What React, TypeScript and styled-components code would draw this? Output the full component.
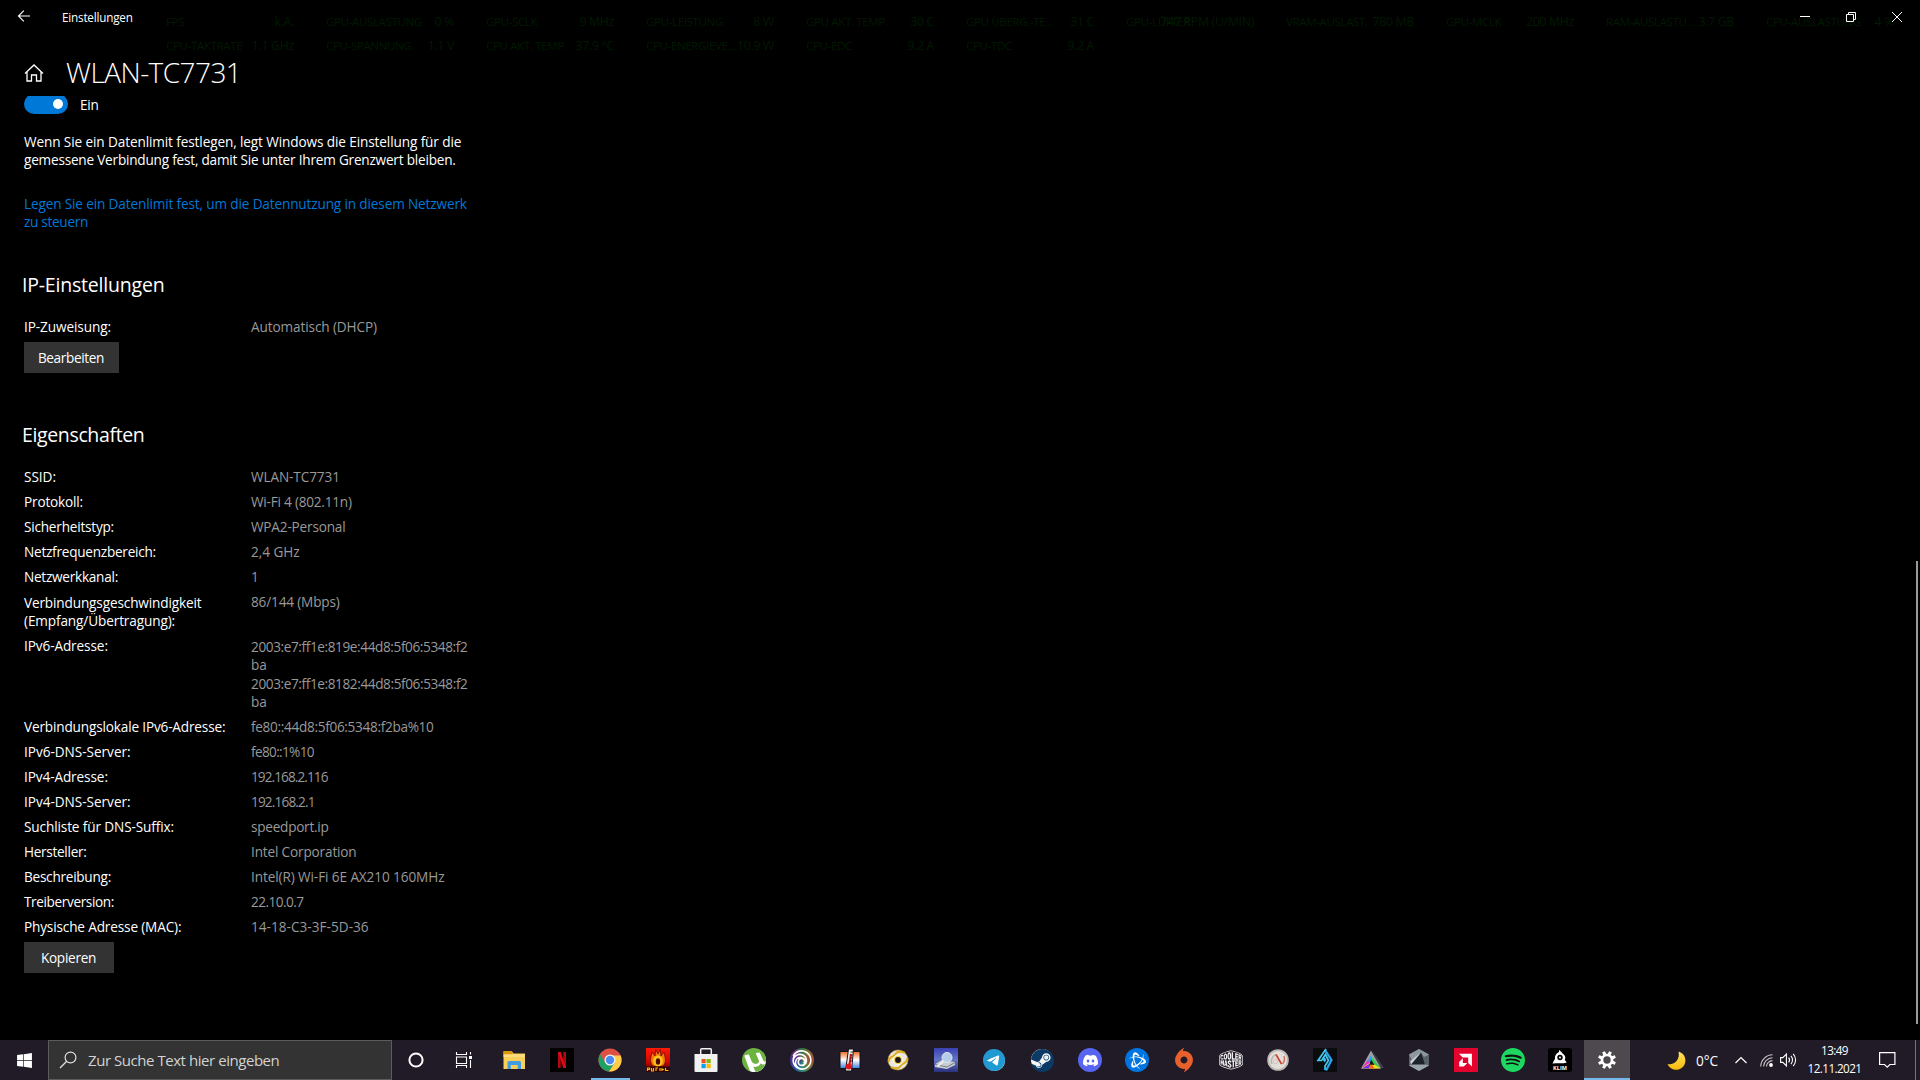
import React from "react";
import styled, { createGlobalStyle } from "styled-components";
import { SiBattledotnet, SiOrigin, SiUbisoft, SiUtorrent, SiCoolermaster, SiTelegram, SiSteam, SiDiscord, SiSpotify } from "react-icons/si";
import { FaWindows } from "react-icons/fa";

const Global = createGlobalStyle`
  html, body { margin: 0; background: #000; }
  body { font-family: "Open Sans", "Noto Sans", sans-serif; color: #fff; overflow: hidden; }
  * { box-sizing: border-box; }
  svg { display: block; overflow: visible; }
`;

const Screen = styled.div`
  position: relative;
  width: 1920px;
  height: 1080px;
  display: flex;
  flex-direction: column;
  overflow: hidden;
  background: #000;
`;

/* ---------- hardware monitor overlay ---------- */
const Overlay = styled.div`
  position: absolute;
  left: 166px;
  top: 10px;
  display: grid;
  grid-template-columns: repeat(11, 160px);
  grid-auto-rows: 24px;
  color: #001a00;
  line-height: 24px;
  white-space: nowrap;
`;
const Metric = styled.div`
  display: grid;
  width: 128px;
`;
const MetricName = styled.span`
  grid-area: 1 / 1;
  font-size: 11.5px;
  letter-spacing: -0.34px;
`;
const MetricValue = styled.span`
  grid-area: 1 / 1;
  justify-self: end;
  font-size: 12.3px;
  letter-spacing: -0.3px;
`;

/* ---------- title bar ---------- */
const TitleBar = styled.header`
  position: relative;
  display: flex;
  align-items: center;
  height: 34px;
  padding-left: 17px;
`;
const BackButton = styled.span`
  width: 45px;
  margin-top: -3px;
`;
const AppName = styled.span`
  flex: 1;
  margin-top: -1px;
  font-size: 11.7px;
  line-height: 18px;
  letter-spacing: -0.2px;
`;
const CaptionButton = styled.span`
  width: 46px;
  display: flex;
  justify-content: center;
`;

/* ---------- page ---------- */
const Body = styled.div`
  position: relative;
  display: flex;
  justify-content: space-between;
  height: 1006px;
`;
const Page = styled.main`
  width: 480px;
  padding: 20px 0 0 24px;
`;
const Heading = styled.h1`
  display: flex;
  align-items: center;
  height: 36px;
  margin: 0;
  font-weight: 300;
  font-size: 28px;
  line-height: 36px;
  letter-spacing: -0.55px;
`;
const HomeIcon = styled.span`
  width: 42px;
  padding-top: 1px;
`;
const ToggleRow = styled.div`
  display: flex;
  align-items: flex-start;
  gap: 12px;
  height: 18px;
  margin-top: 6px;
  overflow: hidden;
`;
const Toggle = styled.span`
  display: flex;
  align-items: center;
  justify-content: flex-end;
  width: 44px;
  height: 20px;
  margin-top: -2px;
  padding-right: 5px;
  border-radius: 10px;
  background: #0078d7;
`;
const Knob = styled.span`
  width: 10px;
  height: 10px;
  border-radius: 50%;
  background: #fff;
`;
const Line = styled.span<{ $ls?: number }>`
  display: block;
  font-size: 13.6px;
  line-height: 18px;
  letter-spacing: ${(p) => p.$ls ?? 0}px;
  white-space: nowrap;
`;
const Paragraph = styled.p`
  margin: 19px 0 0;
`;
const LimitLink = styled.a`
  display: block;
  margin-top: 26px;
  color: #0078d7;
`;
const SectionTitle = styled.h2<{ $ls: number; $gap: number }>`
  margin: ${(p) => p.$gap}px 0 16px -2px;
  font-weight: 400;
  font-size: 19.5px;
  line-height: 26px;
  letter-spacing: ${(p) => p.$ls}px;
`;
const Property = styled.div`
  display: grid;
  grid-template-columns: 227px 1fr;
  padding: 4px 0 3px;
`;
const PropertyLabel = styled.div<{ $multi?: boolean }>`
  padding-top: ${(p) => (p.$multi ? 1 : 0)}px;
`;
const PropertyValue = styled.div`
  color: #999;
`;
const Address = styled.div`
  padding-top: 1px;
`;
const PushButton = styled.button<{ $w: number }>`
  display: flex;
  align-items: center;
  justify-content: center;
  width: ${(p) => p.$w}px;
  height: 31px;
  margin-top: 3px;
  padding: 1px 1px 0 0;
  border: 0;
  background: #333;
  color: #fff;
  font-family: inherit;
`;
const ScrollThumb = styled.div`
  width: 2px;
  height: 463px;
  margin: 527px 2px 0 0;
  background: #9a9a9a;
`;

/* ---------- taskbar ---------- */
const Taskbar = styled.footer`
  display: flex;
  height: 40px;
  background: #211b27;
`;
const TaskItem = styled.div<{ $w?: number; $state?: "running" | "active"; $before?: number }>`
  display: flex;
  align-items: center;
  justify-content: center;
  width: ${(p) => p.$w ?? 48}px;
  margin-left: ${(p) => p.$before ?? 0}px;
  background: ${(p) => (p.$state === "active" ? "#4d494f" : "transparent")};
  position: relative;
  &::after {
    content: "";
    display: ${(p) => (p.$state ? "block" : "none")};
    position: absolute;
    bottom: 0;
    left: ${(p) => (p.$state === "active" ? 0 : 5)}px;
    right: ${(p) => (p.$state === "active" ? 0 : 4)}px;
    height: 2px;
    background: #76b9ed;
  }
`;
const LateGroup = styled.div`
  display: flex;
  gap: 1px;
`;
const SearchBox = styled.div`
  display: flex;
  align-items: center;
  width: 344px;
  padding-left: 10px;
  border: 1px solid #5c5b5e;
  background: #333;
  color: #d2d2d2;
`;
const SearchText = styled.span`
  margin-left: 11px;
  font-size: 15px;
  line-height: 22px;
  letter-spacing: -0.45px;
`;
const Disc = styled.span<{ $size: number; $bg: string; $icon: number; $fg: string }>`
  display: flex;
  align-items: center;
  justify-content: center;
  width: ${(p) => p.$size}px;
  height: ${(p) => p.$size}px;
  border-radius: 50%;
  background: ${(p) => p.$bg};
  color: ${(p) => p.$fg};
  svg { width: ${(p) => p.$icon}px; height: ${(p) => p.$icon}px; flex: none; }
`;
const Tray = styled.div`
  display: grid;
  grid-template-columns: 29px 39px 25px 20px 27px 72px 36px 5px;
  align-items: center;
  margin-left: auto;
`;
const Temperature = styled.span`
  font-size: 13.6px;
  line-height: 20px;
  letter-spacing: -0.1px;
  padding-top: 1px;
`;
const Clock = styled.div`
  width: 55px;
  margin-top: -2px;
  text-align: center;
  font-size: 11.7px;
  line-height: 18px;
  letter-spacing: -0.57px;
`;
const ShowDesktop = styled.div`
  height: 40px;
  border-left: 1px solid #77737b;
`;

const Svg = ({ s = 24, h, children }: { s?: number; h?: number; children: React.ReactNode }) => (
  <svg width={s} height={h ?? s} viewBox={`0 0 ${s} ${h ?? s}`} fill="none">{children}</svg>
);

const metrics: [string, string][] = [
  ["FPS", "k.A."], ["GPU-AUSLASTUNG", "0 %"], ["GPU-SCLK", "9 MHz"], ["GPU-LEISTUNG", "8 W"],
  ["GPU AKT. TEMP.", "30 C"], ["GPU ÜBERG.-TE...", "31 C"], ["GPU-LÜFTER", "747 RPM (U/MIN)"],
  ["VRAM-AUSLAST.", "780 MB"], ["GPU-MCLK", "200 MHz"], ["RAM-AUSLASTU...", "3.7 GB"], ["CPU-AUSLASTUNG", "4 %"],
  ["CPU-TAKTRATE", "1.1 GHz"], ["CPU-SPANNUNG", "1.1 V"], ["CPU AKT. TEMP.", "37.9 °C"],
  ["CPU-ENERGIEVE...", "10.9 W"], ["CPU-EDC", "9.2 A"], ["CPU-TDC", "9.2 A"],
];

type Txt = [string, number];
const before: [Txt, Txt][] = [
  [["SSID:", -0.03], ["WLAN-TC7731", -0.1]],
  [["Protokoll:", -0.17], ["Wi-Fi 4 (802.11n)", -0.22]],
  [["Sicherheitstyp:", -0.215], ["WPA2-Personal", -0.18]],
  [["Netzfrequenzbereich:", -0.245], ["2,4 GHz", -0.05]],
  [["Netzwerkkanal:", -0.255], ["1", 0]],
];
const after: [Txt, Txt][] = [
  [["Verbindungslokale IPv6-Adresse:", -0.16], ["fe80::44d8:5f06:5348:f2ba%10", -0.31]],
  [["IPv6-DNS-Server:", -0.03], ["fe80::1%10", -0.65]],
  [["IPv4-Adresse:", -0.1], ["192.168.2.116", -0.92]],
  [["IPv4-DNS-Server:", -0.03], ["192.168.2.1", -0.84]],
  [["Suchliste für DNS-Suffix:", -0.12], ["speedport.ip", -0.25]],
  [["Hersteller:", -0.3], ["Intel Corporation", -0.16]],
  [["Beschreibung:", -0.257], ["Intel(R) Wi-Fi 6E AX210 160MHz", -0.1]],
  [["Treiberversion:", -0.375], ["22.10.0.7", -0.54]],
  [["Physische Adresse (MAC):", -0.15], ["14-18-C3-3F-5D-36", 0.02]],
];

const Row = ({ item: [l, v] }: { item: [Txt, Txt] }) => (
  <Property>
    <PropertyLabel><Line $ls={l[1]}>{l[0]}</Line></PropertyLabel>
    <PropertyValue><Line $ls={v[1]}>{v[0]}</Line></PropertyValue>
  </Property>
);

const Explorer = () => (
  <Svg>
    <path d="M1.5 3.5h8.5l1.5 2H23v15.5H1.5z" fill="#f9cf5b" />
    <path d="M1.5 3h8l1.5 2.5-1.5 1H1.5z" fill="#d9980f" />
    <path d="M1.5 6.5H23V9H1.5z" fill="#fddc7c" />
    <path d="M5.5 21v-6.5a1.500 1.500 0 0 1 1.500-1.500h10.500a1.500 1.500 0 0 1 1.500 1.500V21h-3.300v-4H8.800v4z" fill="#3f9de0" />
  </Svg>
);
const Netflix = () => (
  <Svg>
    <path d="M0 0h24v24H0z" fill="#000" />
    <path d="M8 4h2.700v15.800L8 20zM13.300 4H16v16l-2.700-.2z" fill="#b20710" />
    <path d="M8 4h2.700L16 20l-2.700-.2z" fill="#e50914" />
  </Svg>
);
const Chrome = () => (
  <Svg>
    <circle cx="12" cy="12" r="11.500" fill="#dd5144" />
    <path d="M2 6.250A11.500 11.500 0 0 0 11 23.450L16.800 14.600 12 12 7.200 14.700z" fill="#1da261" />
    <path d="M22.700 7.500H12l4.800 7.200L11 23.450A11.500 11.500 0 0 0 22.700 7.500z" fill="#ffcd46" />
    <circle cx="12" cy="12" r="5.500" fill="#f4f4f4" />
    <circle cx="12" cy="12" r="4.200" fill="#4a8af4" />
  </Svg>
);
const Burn = () => (
  <Svg>
    <defs><linearGradient id="burn" x2="0" y2="1"><stop stopColor="#ff1a08" /><stop offset=".55" stopColor="#d50700" /><stop offset="1" stopColor="#3c0000" /></linearGradient></defs>
    <path d="M0 0h24v24H0z" fill="url(#burn)" />
    <path d="M7 18C2.500 13 5.500 9 6 4l3 4 .8-6.500L12 6l2.300-4.500L15 8l3-4c.5 5 3.500 9-1 14z" fill="#f97a0c" stroke="#5d0500" strokeWidth=".7" />
    <ellipse cx="12" cy="13" rx="4.800" ry="5.500" fill="#ffc31e" />
    <ellipse cx="12" cy="13.500" rx="2.200" ry="3.300" fill="#4a0a00" />
    <path d="M0 18.500h24V24H0z" fill="#310000" />
    <path d="M1.500 23v-3h2v1.500h-2M5.500 20v3h2v-3M10 23v-3h2M14 20v3M16 23v-3M16 21.500h2M19.500 20v3M19.500 22.500h3" stroke="#f5b514" strokeWidth="1.200" />
  </Svg>
);
const Store = () => (
  <Svg>
    <path d="M6.700 7V1.800a1 1 0 0 1 1-1h8.600a1 1 0 0 1 1 1V7" stroke="#f1f1f1" strokeWidth="1.500" />
    <path d="M.5 6h23v17a1 1 0 0 1-1 1h-21a1 1 0 0 1-1-1z" fill="#f1f1f1" />
    <path d="M7.500 11h4.200v4.200H7.500z" fill="#f25022" /><path d="M12.500 11h4.200v4.200h-4.200z" fill="#7fba00" />
    <path d="M7.500 16h4.200v4.200H7.500z" fill="#00a4ef" /><path d="M12.500 16h4.200v4.200h-4.200z" fill="#ffb900" />
  </Svg>
);
const Thermo = () => (
  <Svg>
    <defs><linearGradient id="th" x2="0" y2="1"><stop stopColor="#f0651c" /><stop offset=".5" stopColor="#fff" /><stop offset="1" stopColor="#3c7fe0" /></linearGradient></defs>
    <path d="M2 3.500h20v17H2z" fill="url(#th)" stroke="#15131a" />
    <path d="M10.500 1h5l-2 22h-6z" fill="#eef5ea" stroke="#15131a" />
    <path d="M13 6l-1.500 11" stroke="#d5151c" strokeWidth="2.200" />
    <circle cx="10.800" cy="18.500" r="3" fill="#e3151c" />
    <path d="M15 4h-2.500M14.700 7h-2M14.400 10h-2M14.100 13h-2" stroke="#222" strokeWidth=".9" />
  </Svg>
);
const GoldDisc = () => (
  <Svg>
    <circle cx="12" cy="12" r="10" fill="#e7e6e2" stroke="#b99a34" strokeWidth=".6" />
    <path d="M2.500 14C3 8 7 9.500 9 6.500S15 3 19 5M21.500 10c-.5 6-4.500 4.500-6.500 7.500s-6 3.500-10 1.500" stroke="#dcae1e" strokeWidth="2" />
    <circle cx="12" cy="12" r="4.900" fill="#f3d35a" stroke="#fff" />
    <circle cx="12" cy="12" r="2.900" fill="#161219" />
  </Svg>
);
const DriveInfo = () => (
  <Svg>
    <defs><linearGradient id="dr" x2="0" y2="1"><stop stopColor="#3a40b4" /><stop offset=".5" stopColor="#6476c4" /><stop offset="1" stopColor="#29307d" /></linearGradient></defs>
    <path d="M0 0h24v24H0z" fill="url(#dr)" />
    <path d="M1 16l7-4 13 2v3l-8 4-12-2z" fill="#c8ccd2" /><path d="M1 16.500l12 2.500 8-4.500" stroke="#777d88" />
    <path d="M9.500 13l-6 5.500" stroke="#eee" strokeWidth="2" />
    <circle cx="13" cy="9.500" r="5" fill="#b5cdea" stroke="#dfe7f0" />
  </Svg>
);
const Gauge = () => (
  <Svg>
    <circle cx="12" cy="12" r="10.800" fill="#bdb9b5" /><circle cx="12" cy="12" r="9" fill="#e4dfda" />
    <path d="M6 16a7 7 0 0 1 4-9.500" stroke="#b9b1aa" strokeWidth="1.500" />
    <path d="M17.800 8a7.500 7.500 0 0 1-1.300 8" stroke="#cf6b58" strokeWidth="1.400" />
    <path d="M10 6.500l5.500 9.500" stroke="#c8402f" strokeWidth="1.600" />
    <circle cx="9.500" cy="13.500" r="2.200" stroke="#cbc3bb" />
  </Svg>
);
const Chevrons = () => (
  <Svg>
    <path d="M0 0h24v24H0z" fill="#0a0c0d" />
    <path d="M12 2l6.500 10L13 22.500" stroke="#2ba6f2" strokeWidth="2.200" />
    <path d="M13 1L5 12.500h3.500l4-6 3 6L12 18v4" stroke="#43c9ee" strokeWidth="1.700" />
    <path d="M9.500 11.500l2-2.500 2 3-2 2.500z" fill="#39b8f0" />
  </Svg>
);
const Prism = () => (
  <Svg>
    <path d="M12 2l12 18h-4z" fill="#3e4047" />
    <path d="M11 2.500L1 20.500h20z" fill="#a2a2a6" />
    <path d="M11 8v7l-9 5z" fill="#ea2bd2" /><path d="M11 8v7l9 5z" fill="#27d04b" /><path d="M11 14l9.500 6.500h-19z" fill="#f4dd1a" />
    <path d="M11 15L2 20.500h7z" fill="#742cf0" /><path d="M11 15l3.500 5.500H9z" fill="#f0691c" /><path d="M11 7l-3 6 3 3z" fill="#23a8ef" />
    <path d="M11 11.500l3.500 5.500-5-.5z" fill="#17121c" />
  </Svg>
);
const Hexagon = () => (
  <Svg>
    <path d="M12 1l10 5.500v11L12 23 2 17.500v-11z" fill="#59616a" />
    <path d="M12 1l10 5.500-5 2.500-3-4.500L6 14l-4-7.500z" fill="#8d979f" />
    <path d="M2 17.500L12 23l10-5.500-5-1.500H6z" fill="#9aa4ab" />
    <path d="M14 4.500L18 16.500H4z" fill="#1d232a" /><path d="M14 4.500L4 16.500 3.200 13z" fill="#c6cdd2" />
  </Svg>
);
const Amd = () => (
  <Svg>
    <path d="M0 0h24v24H0z" fill="#e4032e" />
    <path d="M5 5.700h12.900v12.900l-3.700-3.700V9.500H8.700z" fill="#fff" />
    <path d="M8.800 10.300L5.200 14v4.500h4.500l3.700-3.600H8.800z" fill="#fff" />
  </Svg>
);
const KlimLabel = styled.text`
  font: 700 5.500px "Open Sans", sans-serif;
  fill: #fff;
`;
const Klim = () => (
  <Svg>
    <rect width="24" height="24" rx="3" fill="#000" />
    <path d="M11 2c1 1 2 1 3.500 3.500C17 7 18 9 16.800 12l2 2.500-3 .8H8.500l-4 .2 1.500-3 1-1.500C6.500 8 8 5.500 11 4z" fill="#fff" />
    <circle cx="12" cy="9.500" r="2.700" fill="#000" /><circle cx="12" cy="9.500" r="1" fill="#fff" />
    <KlimLabel x="12" y="22" textAnchor="middle" textLength="14">KLIM</KlimLabel>
  </Svg>
);
const Gear = () => (
  <Svg s={20}>
    <circle cx="10" cy="10" r="5" stroke="#fff" strokeWidth="2.600" />
    {[0, 45, 90, 135, 180, 225, 270, 315].map((a) => (
      <path key={a} d="M8.300 4.500l.3-3.500h2.800l.3 3.500z" fill="#fff" transform={`rotate(${a + 22.500} 10 10)`} />
    ))}
  </Svg>
);

export default function App() {
  return (
    <Screen>
      <Global />
      <Overlay>
        {metrics.map(([n, v]) => (
          <Metric key={n}><MetricName>{n}</MetricName><MetricValue>{v}</MetricValue></Metric>
        ))}
      </Overlay>
      <TitleBar>
        <BackButton>
          <Svg s={14} h={12}><path d="M13 6H1.500M6.800.7L1.500 6l5.300 5.300" stroke="#fff" strokeWidth="1.100" /></Svg>
        </BackButton>
        <AppName>Einstellungen</AppName>
        <CaptionButton><Svg s={10}><path d="M0 4.500h10" stroke="#fff" /></Svg></CaptionButton>
        <CaptionButton><Svg s={10}><path d="M.5 2.500h7v7h-7zM2.500 2.500v-2h7v7h-2" stroke="#fff" /></Svg></CaptionButton>
        <CaptionButton><Svg s={10}><path d="M0 0l10 10M10 0L0 10" stroke="#fff" /></Svg></CaptionButton>
      </TitleBar>

      <Body>
        <Page>
          <Heading>
            <HomeIcon>
              <Svg s={20} h={18}><path d="M1 9.500L10 1l9 8.500M3 8v9h4.500v-6h5v6H17V8" stroke="#fff" strokeWidth="1.300" /></Svg>
            </HomeIcon>
            WLAN-TC7731
          </Heading>
          <ToggleRow>
            <Toggle><Knob /></Toggle>
            <Line $ls={-0.2}>Ein</Line>
          </ToggleRow>
          <Paragraph>
            <Line $ls={-0.11}>Wenn Sie ein Datenlimit festlegen, legt Windows die Einstellung für die</Line>
            <Line $ls={-0.21}>gemessene Verbindung fest, damit Sie unter Ihrem Grenzwert bleiben.</Line>
          </Paragraph>
          <LimitLink>
            <Line $ls={-0.142}>Legen Sie ein Datenlimit fest, um die Datennutzung in diesem Netzwerk</Line>
            <Line $ls={-0.308}>zu steuern</Line>
          </LimitLink>

          <SectionTitle $gap={41} $ls={-0.2}>IP-Einstellungen</SectionTitle>
          <Row item={[["IP-Zuweisung:", -0.09], ["Automatisch (DHCP)", -0.107]]} />
          <PushButton $w={95}><Line $ls={-0.35}>Bearbeiten</Line></PushButton>

          <SectionTitle $gap={49} $ls={-0.36}>Eigenschaften</SectionTitle>
          {before.map((r) => <Row key={r[0][0]} item={r} />)}
          <Property>
            <PropertyLabel $multi>
              <Line $ls={-0.14}>Verbindungsgeschwindigkeit</Line>
              <Line $ls={-0.12}>(Empfang/Übertragung):</Line>
            </PropertyLabel>
            <PropertyValue><Line $ls={-0.16}>86/144 (Mbps)</Line></PropertyValue>
          </Property>
          <Property>
            <PropertyLabel><Line $ls={-0.1}>IPv6-Adresse:</Line></PropertyLabel>
            <PropertyValue>
              <Address><Line $ls={-0.39}>2003:e7:ff1e:819e:44d8:5f06:5348:f2</Line><Line>ba</Line></Address>
              <Address><Line $ls={-0.39}>2003:e7:ff1e:8182:44d8:5f06:5348:f2</Line><Line>ba</Line></Address>
            </PropertyValue>
          </Property>
          {after.map((r) => <Row key={r[0][0]} item={r} />)}
          <PushButton $w={90}><Line $ls={-0.28}>Kopieren</Line></PushButton>
        </Page>
        <ScrollThumb />
      </Body>

      <Taskbar>
        <TaskItem><FaWindows size={17} /></TaskItem>
        <SearchBox>
          <Svg s={18}><circle cx="11.500" cy="6.500" r="5.400" stroke="#e0e0e0" strokeWidth="1.200" /><path d="M7.700 10.300L1 17" stroke="#e0e0e0" strokeWidth="1.300" /></Svg>
          <SearchText>Zur Suche Text hier eingeben</SearchText>
        </SearchBox>
        <TaskItem><Svg s={16}><circle cx="8" cy="8" r="6.600" stroke="#fff" strokeWidth="2" /></Svg></TaskItem>
        <TaskItem>
          <Svg s={17} h={16}>
            <path d="M.5 0v2.500h10V0M.5 5h10v6.500H.5zM.5 16v-2.500h10V16M14.500 0v2.500M14.500 8v8" stroke="#fff" strokeWidth="1.100" />
            <path d="M13 4h3v3h-3z" fill="#fff" />
          </Svg>
        </TaskItem>
        <TaskItem $before={2}><Explorer /></TaskItem>
        <TaskItem><Netflix /></TaskItem>
        <TaskItem $state="running"><Chrome /></TaskItem>
        <TaskItem><Burn /></TaskItem>
        <TaskItem><Store /></TaskItem>
        <TaskItem><Disc $size={23} $icon={24} $bg="#fff" $fg="#6cb33f"><SiUtorrent /></Disc></TaskItem>
        <TaskItem><Disc $size={24} $icon={20} $bg="conic-gradient(#2d7a44,#8a6a30,#a04a38,#6f7a35,#2c8a7c,#2c50a8,#45308a,#752c7c,#2d7a44)" $fg="#fff"><SiUbisoft /></Disc></TaskItem>
        <TaskItem><Thermo /></TaskItem>
        <TaskItem><GoldDisc /></TaskItem>
        <TaskItem><DriveInfo /></TaskItem>
        <TaskItem><Disc $size={21} $icon={22} $bg="#fff" $fg="#2199d3"><SiTelegram /></Disc></TaskItem>
        <TaskItem><Disc $size={22} $icon={23} $bg="#f2f4f6" $fg="#0b3a66"><SiSteam /></Disc></TaskItem>
        <TaskItem><Disc $size={24} $icon={15} $bg="#5865f2" $fg="#fff"><SiDiscord /></Disc></TaskItem>
        <LateGroup>
          <TaskItem $w={46}><Disc $size={24} $icon={17} $bg="#0074e0" $fg="#fff"><SiBattledotnet /></Disc></TaskItem>
          <TaskItem $w={46}><SiOrigin size={24} color="#e8602c" /></TaskItem>
          <TaskItem $w={46}><SiCoolermaster size={24} color="#f0f0f0" /></TaskItem>
          <TaskItem $w={46}><Gauge /></TaskItem>
          <TaskItem $w={46}><Chevrons /></TaskItem>
          <TaskItem $w={46}><Prism /></TaskItem>
          <TaskItem $w={46}><Hexagon /></TaskItem>
          <TaskItem $w={46}><Amd /></TaskItem>
          <TaskItem $w={46}><Disc $size={24} $icon={24} $bg="#0d130f" $fg="#1ed760"><SiSpotify /></Disc></TaskItem>
          <TaskItem $w={46}><Klim /></TaskItem>
          <TaskItem $w={46} $state="active"><Gear /></TaskItem>
        </LateGroup>
        <Tray>
          <Svg s={19}>
            <defs><linearGradient id="moon" x2="0" y2="1"><stop stopColor="#ffe45c" /><stop offset="1" stopColor="#f7b90c" /></linearGradient></defs>
            <path d="M11.500.5A9.300 9.300 0 1 1 .5 13c6 1.800 13-4 11-12.500z" fill="url(#moon)" />
          </Svg>
          <Temperature>0°C</Temperature>
          <Svg s={12} h={8}><path d="M.5 7L6 1.500 11.500 7" stroke="#fff" strokeWidth="1.200" /></Svg>
          <Svg s={13}>
            <path d="M.7 12.500A12 12 0 0 1 12.500.8M3.600 12.500a9 9 0 0 1 8.900-8.800M6.500 12.500a6 6 0 0 1 6-5.900" stroke="#c9c7cc" strokeWidth="1.100" />
            <circle cx="11" cy="11" r="1.900" fill="#fff" />
          </Svg>
          <Svg s={18} h={14}>
            <path d="M.6 4.600h2.200L6.400 1v12L2.800 9.400H.6z" stroke="#fff" strokeWidth="1.100" />
            <path d="M8.600 4.700a3.500 3.500 0 0 1 0 4.600M10.900 2.800a6.300 6.300 0 0 1 0 8.400M13.200.9a9 9 0 0 1 0 12.200" stroke="#fff" strokeWidth="1.100" />
          </Svg>
          <Clock>13:49<br />12.11.2021</Clock>
          <Svg s={17} h={16}><path d="M.6.6h15.300v11.900h-5L8.200 15.200l-2.700-2.700H.6z" stroke="#fff" strokeWidth="1.200" /></Svg>
          <ShowDesktop />
        </Tray>
      </Taskbar>
    </Screen>
  );
}
